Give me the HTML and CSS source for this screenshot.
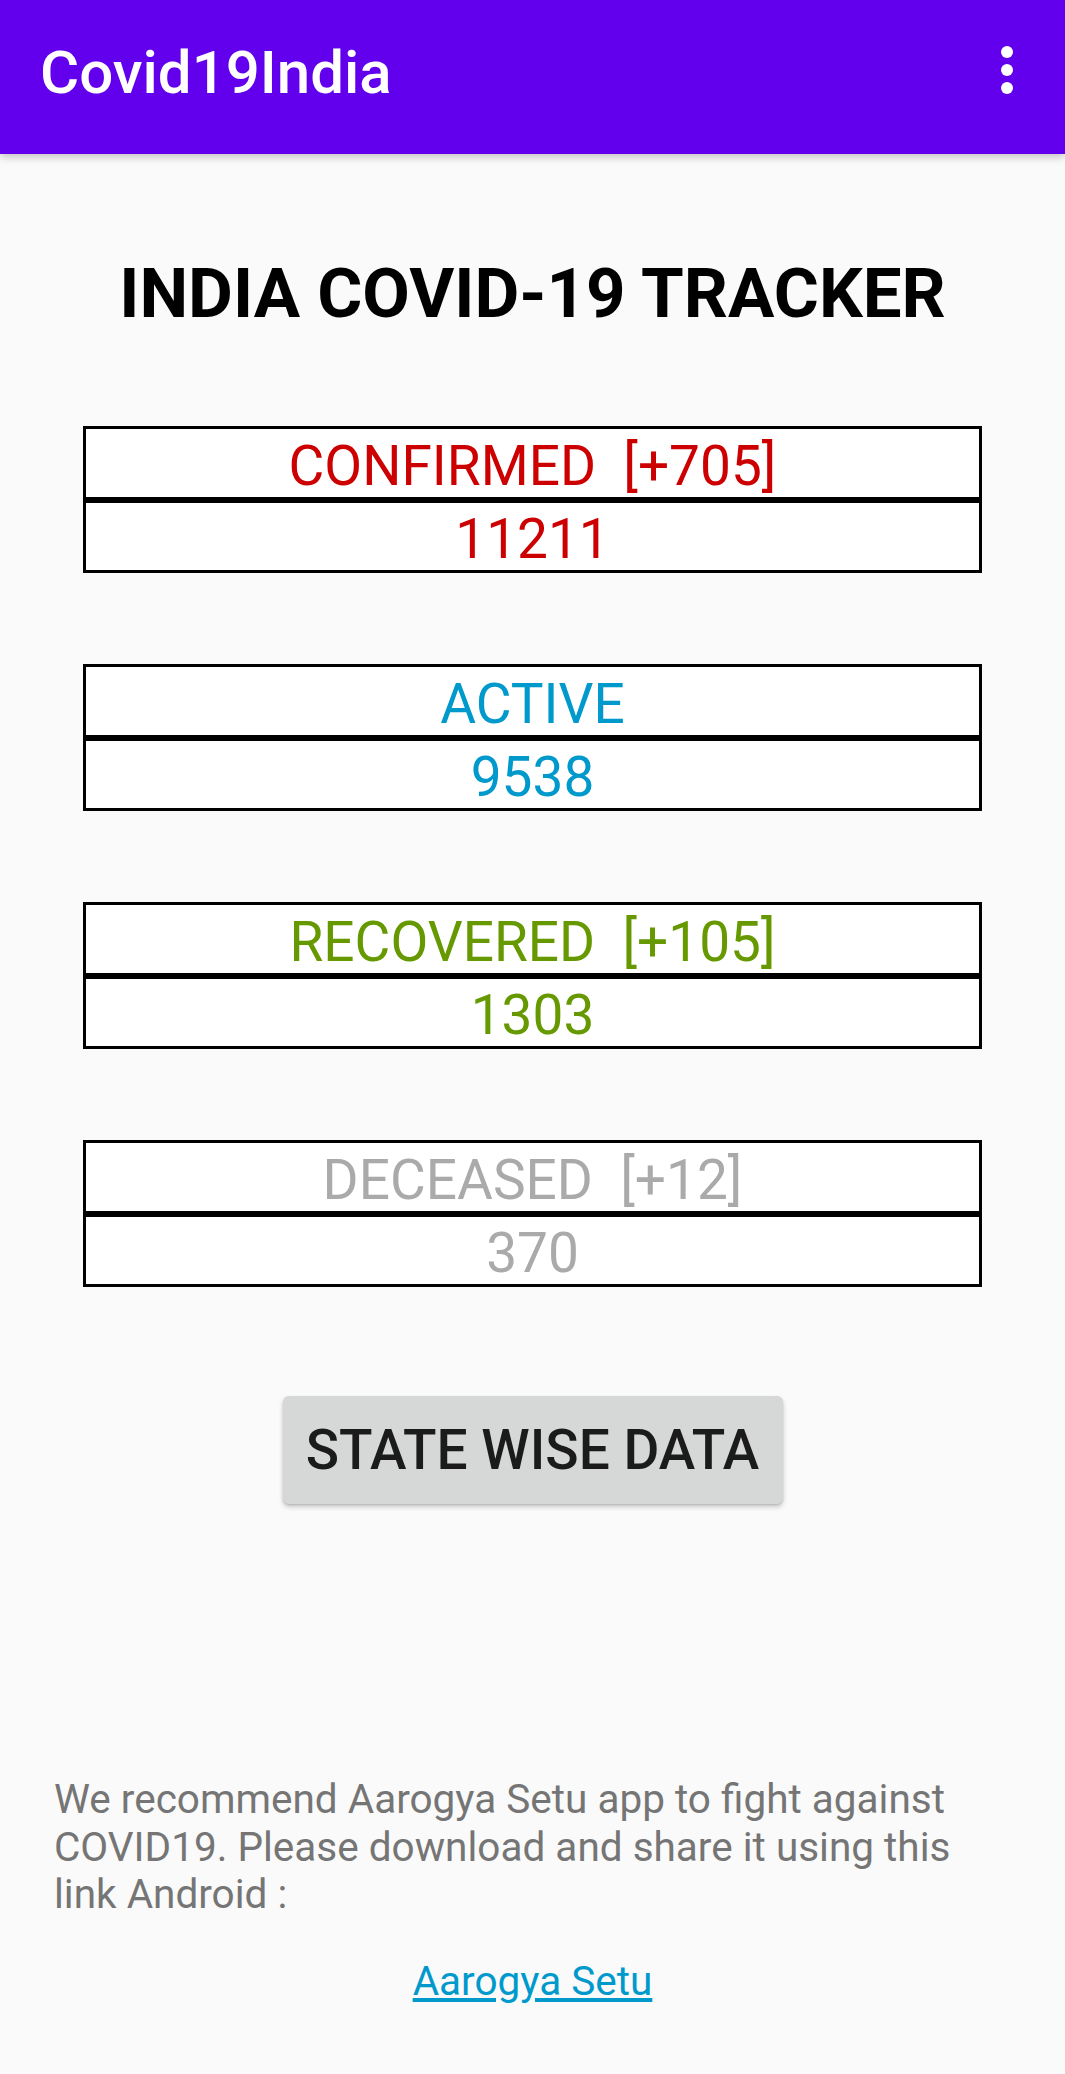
FILE: index.html
```html
<!DOCTYPE html>
<html lang="en">
<head>
<meta charset="utf-8">
<title>Covid19India</title>
<link rel="stylesheet" href="styles.css">
</head>
<body>
<header class="appbar">
  <div class="appbar-title">Covid19India</div>
  <div class="overflow" aria-label="More options">
    <span class="dot"></span><span class="dot"></span><span class="dot"></span>
  </div>
</header>
<main class="content">
  <h1 class="heading">INDIA COVID-19 TRACKER</h1>
  <section class="stats">
    <div class="stat stat-confirmed">
      <div class="cell">CONFIRMED&nbsp;&nbsp;[+705]</div>
      <div class="cell">11211</div>
    </div>
    <div class="stat stat-active">
      <div class="cell">ACTIVE</div>
      <div class="cell">9538</div>
    </div>
    <div class="stat stat-recovered">
      <div class="cell">RECOVERED&nbsp;&nbsp;[+105]</div>
      <div class="cell">1303</div>
    </div>
    <div class="stat stat-deceased">
      <div class="cell">DECEASED&nbsp;&nbsp;[+12]</div>
      <div class="cell">370</div>
    </div>
  </section>
  <div class="actions">
    <button class="state-btn" type="button">STATE WISE DATA</button>
  </div>
  <footer class="footer">
    <p class="footer-text">We recommend Aarogya Setu app to fight against COVID19. Please download and share it using this link Android :</p>
    <p class="footer-link"><a href="#">Aarogya Setu</a></p>
  </footer>
</main>
</body>
</html>
```

FILE: styles.css
```css
* {
  box-sizing: border-box;
}

html, body {
  margin: 0;
  padding: 0;
}

body {
  background: #fafafa;
  font-family: Roboto, "Noto Sans", "Liberation Sans", sans-serif;
  width: 1065px;
  min-height: 2074px;
}

.appbar {
  position: relative;
  z-index: 1;
  height: 154px;
  background: #6200ee;
  display: flex;
  align-items: center;
  justify-content: space-between;
  padding: 0 52px 0 40px;
  box-shadow: 0 3px 8px rgba(0, 0, 0, 0.22);
}

.appbar-title {
  color: #ffffff;
  font-size: 60px;
  font-weight: 500;
  line-height: 60px;
  padding-bottom: 8px;
}

.overflow {
  display: flex;
  flex-direction: column;
  gap: 6px;
  margin-bottom: 14px;
}

.dot {
  display: block;
  width: 12px;
  height: 12px;
  border-radius: 50%;
  background: #ffffff;
}

.content {
  display: flex;
  flex-direction: column;
}

.heading {
  margin: 105px 0 0;
  text-align: center;
  font-size: 69px;
  line-height: 69px;
  font-weight: 700;
  color: #000000;
}

.stats {
  display: flex;
  flex-direction: column;
  gap: 91px;
  margin: 98px 83px 0;
}

.stat {
  display: flex;
  flex-direction: column;
}

.cell {
  height: 73.5px;
  border: 3px solid #000000;
  background: #ffffff;
  display: flex;
  align-items: center;
  justify-content: center;
  padding-top: 6px;
  font-size: 55px;
  white-space: nowrap;
}

.stat-confirmed .cell { color: #cc0000; }
.stat-active .cell { color: #0099cc; }
.stat-recovered .cell { color: #669900; }
.stat-deceased .cell { color: #aaaaaa; }

.actions {
  display: flex;
  justify-content: center;
  margin-top: 109px;
}

.state-btn {
  width: 500px;
  height: 108px;
  border: none;
  border-radius: 6px;
  background: #d6d7d7;
  color: #1b1b1b;
  font-family: Roboto, "Noto Sans", "Liberation Sans", sans-serif;
  font-size: 55px;
  font-weight: 500;
  letter-spacing: 0;
  padding: 0;
  box-shadow: 0 3px 5px rgba(0, 0, 0, 0.2), 0 1px 2px rgba(0, 0, 0, 0.12);
}

.footer {
  margin-top: 272px;
  padding: 0 54px;
}

.footer-text {
  margin: 0;
  font-size: 40.5px;
  line-height: 47.5px;
  color: #757575;
}

.footer-link {
  margin: 39px 0 0;
  text-align: center;
  font-size: 40.5px;
  line-height: 47.5px;
}

.footer-link a {
  color: #0099cc;
  text-decoration: underline;
}
```
